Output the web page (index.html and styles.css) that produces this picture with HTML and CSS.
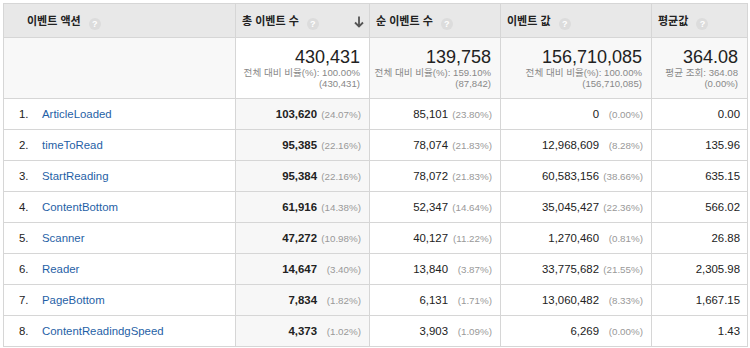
FILE: index.html
```html
<!DOCTYPE html>
<html lang="ko">
<head>
<meta charset="utf-8">
<link rel="stylesheet" href="styles.css">
</head>
<body>
<div class="wrap">
<table class="report">
  <colgroup>
    <col class="c1"><col class="c2"><col class="c3"><col class="c4"><col class="c5">
  </colgroup>
  <thead>
    <tr>
      <th class="h-dim">이벤트 액션 <span class="help">?</span></th>
      <th class="h-sorted"><span class="hl">총 이벤트 수 <span class="help">?</span></span>
        <svg class="sort" width="10" height="12" viewBox="0 0 10 12"><path d="M5 0.5V10.5M1 6.5L5 10.5L9 6.5" fill="none" stroke="#555" stroke-width="1.8"/></svg></th>
      <th>순 이벤트 수 <span class="help">?</span></th>
      <th>이벤트 값 <span class="help">?</span></th>
      <th>평균값 <span class="help">?</span></th>
    </tr>
  </thead>
  <tbody>
    <tr class="total">
      <td class="t-dim"></td>
      <td class="t-num sorted-t"><div class="big">430,431</div><div class="sub">전체 대비 비율(%): 100.00%</div><div class="sub">(430,431)</div></td>
      <td class="t-num"><div class="big">139,758</div><div class="sub">전체 대비 비율(%): 159.10%</div><div class="sub">(87,842)</div></td>
      <td class="t-num"><div class="big">156,710,085</div><div class="sub">전체 대비 비율(%): 100.00%</div><div class="sub">(156,710,085)</div></td>
      <td class="t-num"><div class="big">364.08</div><div class="sub">평균 조회: 364.08</div><div class="sub">(0.00%)</div></td>
    </tr>
    <tr>
      <td class="dim"><span class="idx">1.</span><a class="lnk">ArticleLoaded</a></td>
      <td class="num sorted"><b>103,620</b><span class="pct">(24.07%)</span></td>
      <td class="num">85,101<span class="pct">(23.80%)</span></td>
      <td class="num">0<span class="pct">(0.00%)</span></td>
      <td class="num">0.00</td>
    </tr>
    <tr>
      <td class="dim"><span class="idx">2.</span><a class="lnk">timeToRead</a></td>
      <td class="num sorted"><b>95,385</b><span class="pct">(22.16%)</span></td>
      <td class="num">78,074<span class="pct">(21.83%)</span></td>
      <td class="num">12,968,609<span class="pct">(8.28%)</span></td>
      <td class="num">135.96</td>
    </tr>
    <tr>
      <td class="dim"><span class="idx">3.</span><a class="lnk">StartReading</a></td>
      <td class="num sorted"><b>95,384</b><span class="pct">(22.16%)</span></td>
      <td class="num">78,072<span class="pct">(21.83%)</span></td>
      <td class="num">60,583,156<span class="pct">(38.66%)</span></td>
      <td class="num">635.15</td>
    </tr>
    <tr>
      <td class="dim"><span class="idx">4.</span><a class="lnk">ContentBottom</a></td>
      <td class="num sorted"><b>61,916</b><span class="pct">(14.38%)</span></td>
      <td class="num">52,347<span class="pct">(14.64%)</span></td>
      <td class="num">35,045,427<span class="pct">(22.36%)</span></td>
      <td class="num">566.02</td>
    </tr>
    <tr>
      <td class="dim"><span class="idx">5.</span><a class="lnk">Scanner</a></td>
      <td class="num sorted"><b>47,272</b><span class="pct">(10.98%)</span></td>
      <td class="num">40,127<span class="pct">(11.22%)</span></td>
      <td class="num">1,270,460<span class="pct">(0.81%)</span></td>
      <td class="num">26.88</td>
    </tr>
    <tr>
      <td class="dim"><span class="idx">6.</span><a class="lnk">Reader</a></td>
      <td class="num sorted"><b>14,647</b><span class="pct">(3.40%)</span></td>
      <td class="num">13,840<span class="pct">(3.87%)</span></td>
      <td class="num">33,775,682<span class="pct">(21.55%)</span></td>
      <td class="num">2,305.98</td>
    </tr>
    <tr>
      <td class="dim"><span class="idx">7.</span><a class="lnk">PageBottom</a></td>
      <td class="num sorted"><b>7,834</b><span class="pct">(1.82%)</span></td>
      <td class="num">6,131<span class="pct">(1.71%)</span></td>
      <td class="num">13,060,482<span class="pct">(8.33%)</span></td>
      <td class="num">1,667.15</td>
    </tr>
    <tr>
      <td class="dim"><span class="idx">8.</span><a class="lnk">ContentReadindgSpeed</a></td>
      <td class="num sorted"><b>4,373</b><span class="pct">(1.02%)</span></td>
      <td class="num">3,903<span class="pct">(1.09%)</span></td>
      <td class="num">6,269<span class="pct">(0.00%)</span></td>
      <td class="num">1.43</td>
    </tr>
  </tbody>
</table>
</div>
</body>
</html>
```

FILE: styles.css
```css
html, body {
  margin: 0;
  padding: 0;
  background: #fff;
}
body {
  font-family: "Liberation Sans", Arial, "Noto Sans CJK KR", sans-serif;
  color: #222;
}
.wrap {
  padding: 3px 0 0 3px;
}
.report {
  border-collapse: collapse;
  table-layout: fixed;
  width: 744px;
}
.c1 { width: 232px; }
.c2 { width: 134px; }
.c3 { width: 131px; }
.c4 { width: 151px; }
.c5 { width: 96px; }

.report th, .report td {
  border: 1px solid #d6d6d6;
  padding: 0;
}
.report th {
  background: #e8e8e8;
  height: 33px;
  text-align: left;
  font-size: 11px;
  font-weight: bold;
  color: #222;
  padding-left: 6px;
  font-family: "Noto Sans CJK KR", "Liberation Sans", sans-serif;
  white-space: nowrap;
}
.report th.h-dim {
  padding-left: 23px;
}
.report th.h-sorted {
  position: relative;
}
.help {
  display: inline-block;
  width: 12px;
  height: 12px;
  border-radius: 50%;
  background: #dcdcdc;
  color: #fff;
  font-size: 9px;
  font-weight: bold;
  line-height: 12px;
  text-align: center;
  font-family: "Liberation Sans", sans-serif;
  margin-left: 5px;
  vertical-align: -2px;
}
.sort {
  position: absolute;
  right: 5px;
  top: 12px;
}

.total td {
  height: 51px;
  background: #f8f8f8;
  vertical-align: top;
}
.total td.sorted-t {
  background: #fff;
}
.t-num {
  text-align: right;
  padding-right: 9px !important;
  padding-top: 9px !important;
}
.big {
  font-size: 18px;
  line-height: 20px;
  color: #222;
}
.sub {
  font-size: 9.6px;
  line-height: 11px;
  color: #888;
  font-family: "Liberation Sans", "Noto Sans CJK KR", sans-serif;
}

tbody tr:not(.total) td {
  height: 30px;
  font-size: 11.4px;
  vertical-align: middle;
}
td.dim {
  padding-left: 15px;
  white-space: nowrap;
}
.idx {
  display: inline-block;
  width: 23px;
  color: #222;
}
.lnk {
  color: #1f5fa6;
  text-decoration: none;
}
td.num {
  text-align: right;
  padding-right: 8px;
  white-space: nowrap;
  color: #222;
}
td.sorted {
  background: #f7f7f7;
}
td.num b {
  font-weight: bold;
}
.pct {
  display: inline-block;
  width: 44px;
  text-align: right;
  font-size: 9.8px;
  color: #999;
}
td.num:last-child {
  padding-right: 7px;
}
```
